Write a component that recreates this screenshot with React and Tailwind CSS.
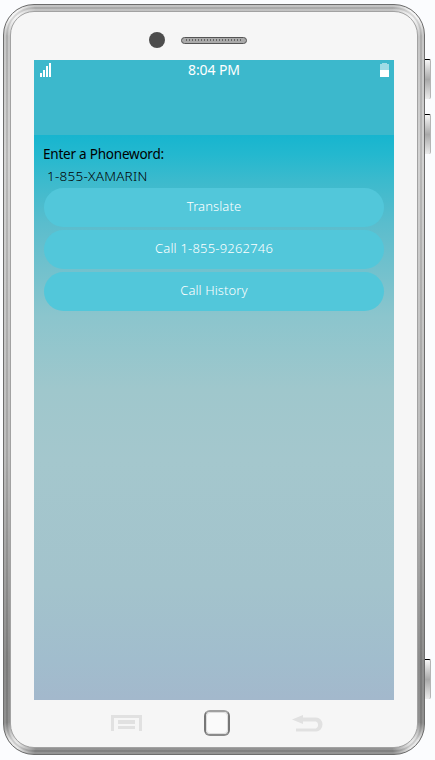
import React from "react";

const SideKey = ({ className }) => (
  <div className={`h-10 w-[6px] shrink-0 rounded-r-[2px] border-t border-r border-t-black border-r-[#b5b5b5] bg-linear-to-b from-[#f8f8f8] via-[#a9a9a9] to-[#ececec] ${className}`} />
);

const PillButton = ({ children, className = "" }) => (
  <button className={`flex h-[39px] w-full items-center justify-center rounded-full bg-[#52c7da] pb-px text-[13px] font-light text-white ${className}`}>
    {children}
  </button>
);

function StatusBar() {
  return (
    <div className="grid h-5 grid-cols-3 items-center px-[5px] text-white">
      <svg className="-mt-px" width="13" height="15" viewBox="0 0 13 15" fill="white" shapeRendering="crispEdges">
        <path d="M1 11h2v4H1zM4 8h2v7H4zM7 4h2v11H7zM10 1h2v14h-2z" />
      </svg>
      <span className="text-center text-[14px] leading-5 tracking-[-0.1px] whitespace-nowrap">8:04 PM</span>
      <svg className="-mt-px justify-self-end" width="9" height="15" viewBox="0 0 9 15" shapeRendering="crispEdges">
        <path d="M0 2h2V1h5v1h2v6H0z" fill="#9edce6" />
        <path d="M0 8h9v7H0z" fill="white" />
      </svg>
    </div>
  );
}

function Screen() {
  return (
    <div className="flex h-[640px] w-[360px] shrink-0 flex-col bg-[linear-gradient(180deg,#17b5cf_75px,#24b8cf_95px,#3bbacd_120px,#5bbdcd_165px,#72c1cd_210px,#8bc5cd_255px,#9fc7cc_330px,#a4c7cd_400px,#a3c3cc_525px,#a1bdcd_600px,#a3b8cc_640px)]">
      <header className="h-[75px] bg-[#3cb8cc]"><StatusBar /></header>
      <main className="flex flex-col px-[10px] pt-[9px]">
        <label className="-ml-px h-5 text-[13.5px] leading-5 font-normal tracking-[-0.22px] text-black">Enter a Phoneword:</label>
        <div className="mt-[2px] h-[22px] pl-[3px] text-[13.5px] leading-[20px] font-light tracking-[0.25px] text-black">1-855-XAMARIN</div>
        <div className="flex flex-col gap-[3px]">
          <PillButton className="tracking-[0.1px]">Translate</PillButton>
          <PillButton className="tracking-[0.2px]">Call 1-855-9262746</PillButton>
          <PillButton className="tracking-[0.1px]">Call History</PillButton>
        </div>
      </main>
    </div>
  );
}

export default function App() {
  return (
    <div className="flex h-[760px] w-[435px] overflow-hidden bg-[#fbfcfe] pt-1 pl-[3px] font-['Noto_Sans','Open_Sans',sans-serif]">
      <div className="h-[751px] w-[422px] shrink-0 rounded-[31px] border border-[#6c6c6c] bg-[radial-gradient(circle_at_8px_8px,#f4f4f4_6px,transparent_24px),radial-gradient(circle_at_412px_8px,#f4f4f4_6px,transparent_24px),radial-gradient(circle_at_8px_741px,#e8e8e8_6px,transparent_24px),radial-gradient(circle_at_412px_741px,#e8e8e8_6px,transparent_24px),linear-gradient(180deg,#c2c2c2,#d2d2d2_20%,#bcbcbc_60%,#8b8b8b_88%,#929292)] p-[2px]">
        <div className="h-full rounded-[28px] border-2 border-black/12 p-[2px]">
          <div className="flex h-full flex-col items-center rounded-[24px] border border-[#a2a2a2] bg-[#f6f6f6]">
            <div className="flex h-[48px] w-full shrink-0 items-center pl-[138px]">
              <div className="mt-[8px] size-4 rounded-full bg-[#4d4d4d]" />
              <div className="mt-[8px] ml-4 flex h-[7px] w-[66px] items-center rounded-full border border-[#555] bg-[#aaa] px-1">
                <div className="h-[2px] w-full bg-[repeating-linear-gradient(90deg,#666_0px,#666_1px,transparent_1px,transparent_3px)]" />
              </div>
            </div>
            <Screen />
            <nav className="flex h-[46px] w-full items-center pl-[100px]">
              <svg width="31" height="16" viewBox="0 0 31 16" fill="#e1e1e1" shapeRendering="crispEdges">
                <path d="M0 0h31v16h-3V3H3v13H0zM7 5h17v4H7zM7 11h17v3H7z" />
              </svg>
              <div className="ml-[62px] h-[26px] w-[26px] rounded-[6px] border-2 border-[#8b8b8b] border-t-[#a0a0a0] border-l-[#777] border-r-[#777] bg-[#fafafa]"><div className="h-full rounded-[4px] border border-[#ddd]" /></div>
              <svg className="ml-[62px]" width="31" height="17" viewBox="0 0 31 17">
                <path d="M0 4.5 11 0v2.5h13a6.5 7 0 0 1 0 14H4v-3h20a3.5 3.8 0 0 0 0-7H11V9z" fill="#e1e1e1" />
              </svg>
            </nav>
          </div>
        </div>
      </div>
      <div className="flex w-[6px] shrink-0 flex-col pt-[55px]">
        <SideKey className="" />
        <SideKey className="mt-[15px]" />
        <SideKey className="mt-[505px]" />
      </div>
    </div>
  );
}
